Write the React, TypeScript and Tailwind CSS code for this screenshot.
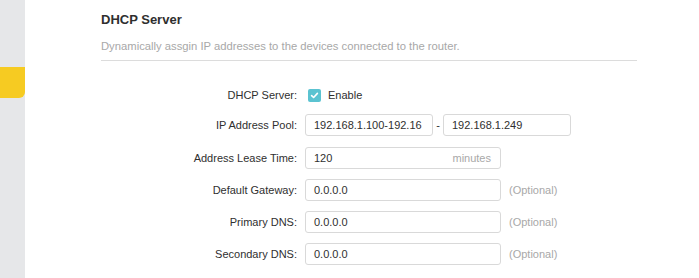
import React from 'react';

const font = { fontFamily: '"Liberation Sans", Arial, sans-serif' };

function Field({ value, suffix, className = 'w-[196px]' }: { value: string; suffix?: string; className?: string }) {
  return (
    <div className={`flex h-[22px] items-center justify-between rounded-[3px] border border-[#d9d9d9] bg-white pl-[8px] pr-[9px] ${className}`}>
      <span className="text-[#2f2f2f]">{value}</span>
      {suffix && <span className="text-[#a8a8a8]">{suffix}</span>}
    </div>
  );
}

function Row({ label, children, className = '' }: { label: string; children: React.ReactNode; className?: string }) {
  return (
    <div className={`flex items-center ${className}`}>
      <div className="w-[196px] text-right text-[#2f2f2f]">{label}</div>
      <div className="ml-[8px] flex items-center">{children}</div>
    </div>
  );
}

export default function App() {
  return (
    <div className="flex h-[278px] w-[699px] bg-white text-[11px] leading-[13px]" style={font}>
      {/* sidebar strip */}
      <div className="w-[25px] shrink-0 bg-[#e6e7e9]">
        <div className="mt-[67px] h-[31px] rounded-br-[6px] bg-[#f6cb22]" />
      </div>

      <div className="flex-1 pl-[76px] pr-[62px]">
        <h2 className="pt-[12px] text-[13px] font-bold leading-[15px] text-[#2f2f2f]">DHCP Server</h2>
        <p className="mt-[12px] border-b border-[#dcdcdc] pb-[7px] text-[11.25px] leading-[14px] text-[#a8a8a8]">
          Dynamically assgin IP addresses to the devices connected to the router.
        </p>

        <div className="flex flex-col">
          <Row label="DHCP Server:" className="mt-[24px] h-[20px]">
            <div className="ml-[3px] flex h-[13px] w-[13px] items-center justify-center rounded-[2px] bg-[#5bc3d1]">
              <svg width="9" height="9" viewBox="0 0 9 9" fill="none">
                <path d="M1.6 4.6 L3.6 6.5 L7.4 2.4" stroke="white" strokeWidth="1.6" strokeLinecap="round" strokeLinejoin="round" />
              </svg>
            </div>
            <span className="ml-[7px] text-[#2f2f2f]">Enable</span>
          </Row>

          <Row label="IP Address Pool:" className="mt-[9px] h-[22px]">
            <Field value="192.168.1.100-192.16" className="w-[128px]" />
            <span className="w-[10px] text-center text-[#2f2f2f]">-</span>
            <Field value="192.168.1.249" className="w-[128px]" />
          </Row>

          <Row label="Address Lease Time:" className="mt-[11px] h-[22px]">
            <Field value="120" suffix="minutes" />
          </Row>

          {['Default Gateway:', 'Primary DNS:', 'Secondary DNS:'].map((l) => (
            <Row key={l} label={l} className="mt-[10px] h-[22px]">
              <Field value="0.0.0.0" />
              <span className="ml-[8px] text-[#a8a8a8]">(Optional)</span>
            </Row>
          ))}
        </div>
      </div>
    </div>
  );
}
